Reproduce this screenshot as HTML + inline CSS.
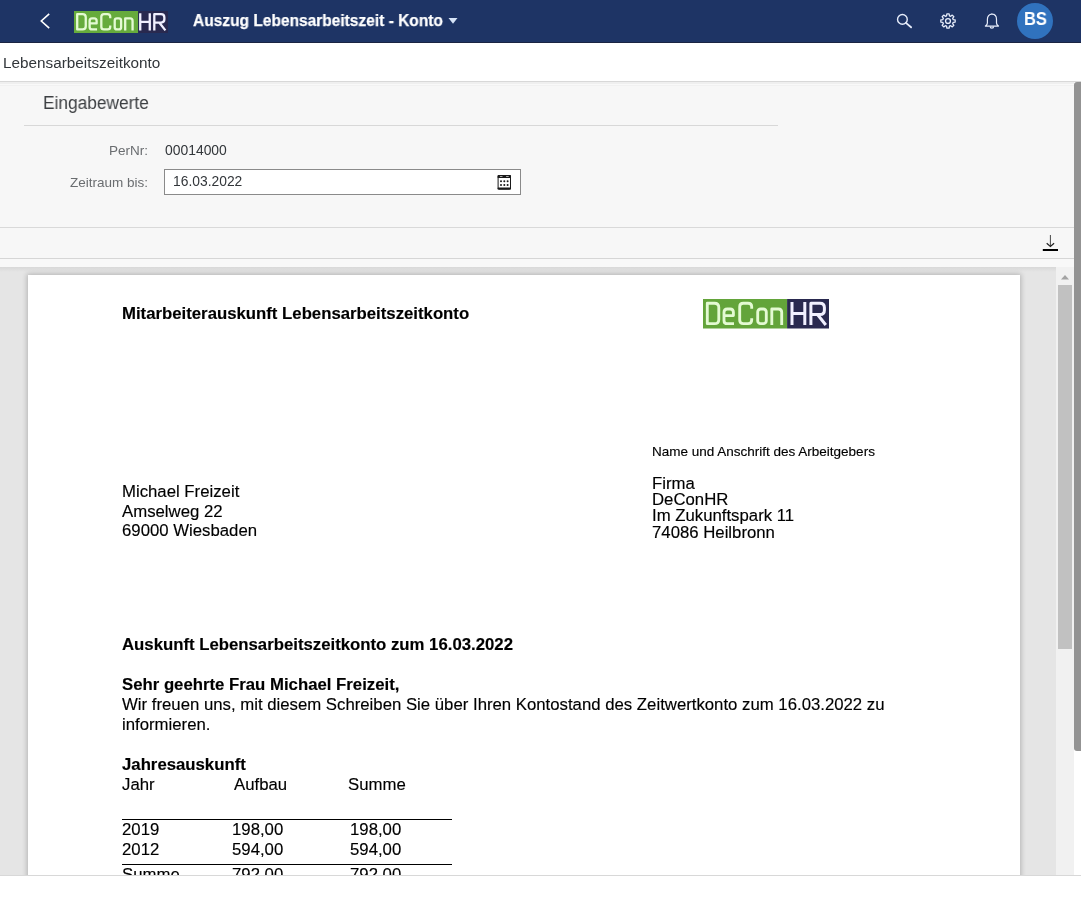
<!DOCTYPE html>
<html><head><meta charset="utf-8">
<style>
*{box-sizing:border-box;margin:0;padding:0}
html,body{width:1081px;height:908px;overflow:hidden;background:#fff;font-family:"Liberation Sans",sans-serif}
.a{position:absolute;white-space:nowrap;line-height:1;will-change:transform}
#hdr{position:absolute;left:0;top:0;width:1081px;height:43px;background:#1e3465;border-bottom:1px solid #1b2542}
#sub{position:absolute;left:0;top:43px;width:1081px;height:39px;background:#fff;border-bottom:1px solid #d8d8d8}
#form{position:absolute;left:0;top:82px;width:1074px;height:146px;background:linear-gradient(#efefef 0,#efefef 2px,#f9f9f9 2px,#f9f9f9 3px,#f1f1f1 3px,#f1f1f1 4px,#f7f7f7 4px);border-bottom:1px solid #d9d9d9}
#tool{position:absolute;left:0;top:228px;width:1074px;height:31px;background:#f7f7f7;border-bottom:1px solid #d6d6d6}
#gap{position:absolute;left:0;top:259px;width:1074px;height:8px;background:#f8f8f8}
#viewer{position:absolute;left:0;top:267px;width:1056px;height:608px;background:#e5e5e5;overflow:hidden}
#page{position:absolute;left:28px;top:8px;width:992px;height:700px;background:#fff;box-shadow:0 0 5px 1px rgba(0,0,0,0.22)}
#vtop{position:absolute;left:0;top:0;width:1056px;height:5px;background:linear-gradient(#d8d8d8,#e5e5e5)}
#track{position:absolute;left:1056px;top:267px;width:18px;height:608px;background:#f1f1f1}
#thumb{position:absolute;left:1058px;top:285px;width:14px;height:364px;background:#c1c1c1}
#vbot{position:absolute;left:0;top:875px;width:1081px;height:1px;background:#d8d8d8}
#osb{position:absolute;left:1074px;top:82px;width:7px;height:669px;background:#939393;border-radius:3px 0 0 3px}
.doc{position:absolute;left:0;top:-267px;width:1081px;height:908px;color:#000}
.doc .a{-webkit-text-stroke:0.15px #000}
</style></head><body>
<div id="hdr">
  <svg class="a" style="left:38px;top:12px" width="14" height="18" viewBox="0 0 14 18"><polyline points="11.2,1.8 3.3,9 11.2,16.2" fill="none" stroke="#fff" stroke-width="1.6"/></svg>
  <svg class="a" style="left:74px;top:11px" width="94" height="22" viewBox="0 0 126.3 29.5" preserveAspectRatio="none">
    <rect x="0" y="0" width="86.3" height="29.5" fill="#66ab3c"/>
    <rect x="86.3" y="0" width="43" height="29.5" fill="#29294f"/>
    <g fill="none" stroke="#e4fad3" stroke-width="3.1" stroke-linejoin="round">
    <path d="M4.3,4.2 H11.5 Q15.8,4.2 15.8,8.5 V20.4 Q15.8,24.7 11.5,24.7 H4.3 Z"/>
    <path d="M21,16.6 H30.4 V13.3 Q30.4,10 27.1,10 H24.3 Q21,10 21,13.3 V21.4 Q21,24.7 24.3,24.7 H31"/>
    <path d="M48.7,9.8 V7.8 Q48.7,4.2 45.1,4.2 H40.3 Q36.7,4.2 36.7,7.8 V21.1 Q36.7,24.7 40.3,24.7 H45.1 Q48.7,24.7 48.7,21.1 V19.3"/>
    <rect x="54.7" y="10" width="8.6" height="14.7" rx="3"/>
    <path d="M68.8,26 V10 H75.4 Q78.7,10 78.7,13.3 V26"/>
    </g>
    <g fill="none" stroke="#f1f0ff" stroke-width="3.1" stroke-linejoin="round">
    <path d="M89,2.9 V26 M101.8,2.9 V26 M89,14.6 H101.8"/>
    <path d="M107.9,26 V4.2 H117 Q121.4,4.2 121.4,8.6 V11.2 Q121.4,15.5 117,15.5 H107.9 M114.5,15.5 L122.8,26"/>
    </g>
  </svg>
  <div class="a" style="left:192.5px;top:11.8px;font-size:16.5px;font-weight:bold;color:#fff;transform:scaleX(0.94);transform-origin:0 0;-webkit-text-stroke:0.25px #fff">Auszug Lebensarbeitszeit - Konto</div>
  <svg class="a" style="left:448px;top:17px" width="10" height="8" viewBox="0 0 10 8"><polygon points="0.5,1 9.5,1 5,6.8" fill="#d6e4f7"/></svg>
  <svg class="a" style="left:894px;top:11px" width="20" height="20" viewBox="0 0 20 20"><circle cx="8.4" cy="8.4" r="4.85" fill="none" stroke="#e6ecfa" stroke-width="1.4"/><line x1="11.9" y1="11.9" x2="17.1" y2="16.3" stroke="#e6ecfa" stroke-width="1.8" stroke-linecap="round"/></svg>
  <svg class="a" style="left:938px;top:11px" width="20" height="20" viewBox="0 0 20 20">
    <path d="M8.53,4.86 L8.89,2.84 L11.11,2.84 L11.47,4.86 L12.59,5.32 L14.28,4.15 L15.85,5.72 L14.68,7.41 L15.14,8.53 L17.16,8.89 L17.16,11.11 L15.14,11.47 L14.68,12.59 L15.85,14.28 L14.28,15.85 L12.59,14.68 L11.47,15.14 L11.11,17.16 L8.89,17.16 L8.53,15.14 L7.41,14.68 L5.72,15.85 L4.15,14.28 L5.32,12.59 L4.86,11.47 L2.84,11.11 L2.84,8.89 L4.86,8.53 L5.32,7.41 L4.15,5.72 L5.72,4.15 L7.41,5.32Z" fill="none" stroke="#e6ecfa" stroke-width="1.3" stroke-linejoin="round"/>
    <circle cx="10" cy="10" r="2.45" fill="none" stroke="#e6ecfa" stroke-width="1.3"/>
  </svg>
  <svg class="a" style="left:982px;top:11px" width="20" height="20" viewBox="0 0 20 20">
    <path d="M9.9,3.1 C7.1,3.1 5.4,5.3 5.4,8.3 V12.1 C5.4,13.5 4.6,14.4 3.4,15.1 H16.5 C15.3,14.4 14.5,13.5 14.5,12.1 V8.3 C14.5,5.3 12.7,3.1 9.9,3.1 Z M9.9,2.2 V3.1" fill="none" stroke="#e6ecfa" stroke-width="1.2" stroke-linejoin="round"/>
    <path d="M8.2,15.5 A1.7,1.7 0 0 0 11.6,15.5" fill="none" stroke="#e6ecfa" stroke-width="1.3"/>
  </svg>
  <div class="a" style="left:1017px;top:3px;width:36px;height:36px;border-radius:50%;background:#3072be"></div>
  <div class="a" style="left:1024.4px;top:11.4px;font-size:17.8px;font-weight:bold;color:#fff;transform:scaleX(0.93);transform-origin:0 0">BS</div>
</div>
<div id="sub"><div class="a" style="left:2.8px;top:11.8px;font-size:15.3px;color:#32363a">Lebensarbeitszeitkonto</div></div>
<div id="form">
  <div class="a" style="left:43px;top:12.2px;font-size:18px;color:#3c3f42;transform:scaleX(0.962);transform-origin:0 0">Eingabewerte</div>
  <div class="a" style="left:24px;top:43px;width:754px;height:1px;background:#d8d8d8"></div>
  <div class="a" style="left:0;width:148px;text-align:right;top:61.7px;font-size:13.5px;color:#6a6d70">PerNr:</div>
  <div class="a" style="left:164.9px;top:61.6px;font-size:13.9px;color:#32363a">00014000</div>
  <div class="a" style="left:0;width:148px;text-align:right;top:93.6px;font-size:13.5px;color:#6a6d70">Zeitraum bis:</div>
  <div class="a" style="left:164px;top:87px;width:357px;height:26px;background:#fff;border:1px solid #8a8a8a"></div>
  <div class="a" style="left:173px;top:93.3px;font-size:13.85px;color:#32363a">16.03.2022</div>
  <svg class="a" style="left:496px;top:92px" width="16" height="16" viewBox="0 0 16 16">
    <rect x="2.1" y="1.6" width="12.4" height="13.6" rx="0.8" fill="none" stroke="#1a1a1a" stroke-width="1"/>
    <rect x="1.6" y="1.1" width="13.4" height="2.9" rx="0.6" fill="#1a1a1a"/>
    <rect x="3.9" y="2.1" width="2.6" height="0.8" fill="#fff" opacity="0.8"/>
    <rect x="10.1" y="2.1" width="2.6" height="0.8" fill="#fff" opacity="0.8"/>
    <rect x="1.6" y="13.6" width="13.4" height="2" rx="0.6" fill="#1a1a1a"/>
    <g fill="#1a1a1a"><circle cx="5" cy="7.2" r="1"/><circle cx="8.3" cy="7.2" r="1"/><circle cx="11.6" cy="7.2" r="1"/><circle cx="5" cy="11" r="1"/><circle cx="8.3" cy="11" r="1"/><circle cx="11.6" cy="11" r="1"/></g>
  </svg>
</div>
<div id="tool">
  <svg class="a" style="left:1040px;top:4px" width="20" height="24" viewBox="0 0 20 24">
    <line x1="10.4" y1="3" x2="10.4" y2="14" stroke="#333" stroke-width="0.9"/>
    <polyline points="6.7,11.3 10.4,14.5 14.1,11.3" fill="none" stroke="#222" stroke-width="1.2"/>
    <rect x="2.8" y="17" width="15.2" height="2" fill="#000"/>
  </svg>
</div>
<div id="gap"></div>
<div id="viewer">
  <div id="vtop"></div>
  <div id="page"></div>
  <div class="doc">
  <div class="a" style="left:121.9px;top:305.87px;font-size:16.75px;font-weight:bold">Mitarbeiterauskunft Lebensarbeitszeitkonto</div>
  <svg class="a" style="left:703.3px;top:299.2px" width="126.3" height="29.5" viewBox="0 0 126.3 29.5"><rect x="0" y="0" width="84.1" height="29.5" fill="#63a43a"/>
    <rect x="84.1" y="0" width="43" height="29.5" fill="#29294f"/>
    <g fill="none" stroke="#e4fad3" stroke-width="2.85" stroke-linejoin="round">
    <path d="M4.3,4.2 H11.5 Q15.8,4.2 15.8,8.5 V20.4 Q15.8,24.7 11.5,24.7 H4.3 Z"/>
    <path d="M21,16.6 H30.4 V13.3 Q30.4,10 27.1,10 H24.3 Q21,10 21,13.3 V21.4 Q21,24.7 24.3,24.7 H31"/>
    <path d="M48.7,9.8 V7.8 Q48.7,4.2 45.1,4.2 H40.3 Q36.7,4.2 36.7,7.8 V21.1 Q36.7,24.7 40.3,24.7 H45.1 Q48.7,24.7 48.7,21.1 V19.3"/>
    <rect x="54.7" y="10" width="8.6" height="14.7" rx="3"/>
    <path d="M68.8,26 V10 H75.4 Q78.7,10 78.7,13.3 V26"/>
    </g>
    <g fill="none" stroke="#f1f0ff" stroke-width="3" stroke-linejoin="round">
    <path d="M89,2.9 V26 M101.8,2.9 V26 M89,14.6 H101.8"/>
    <path d="M107.9,26 V4.2 H117 Q121.4,4.2 121.4,8.6 V11.2 Q121.4,15.5 117,15.5 H107.9 M114.5,15.5 L122.8,26"/>
    </g></svg>
  <div class="a" style="left:652.2px;top:445.37px;font-size:13.5px">Name und Anschrift des Arbeitgebers</div>
  <div class="a" style="left:652.4px;top:475.97px;font-size:16.75px">Firma</div>
  <div class="a" style="left:652.4px;top:492.17px;font-size:16.75px">DeConHR</div>
  <div class="a" style="left:652.4px;top:508.37px;font-size:16.75px">Im Zukunftspark 11</div>
  <div class="a" style="left:652.4px;top:524.57px;font-size:16.75px">74086 Heilbronn</div>
  <div class="a" style="left:121.9px;top:483.97px;font-size:16.75px">Michael Freizeit</div>
  <div class="a" style="left:121.9px;top:503.62px;font-size:16.75px">Amselweg 22</div>
  <div class="a" style="left:121.9px;top:523.27px;font-size:16.75px">69000 Wiesbaden</div>
  <div class="a" style="left:121.9px;top:636.67px;font-size:16.75px;font-weight:bold">Auskunft Lebensarbeitszeitkonto zum 16.03.2022</div>
  <div class="a" style="left:121.9px;top:676.67px;font-size:16.75px;font-weight:bold">Sehr geehrte Frau Michael Freizeit,</div>
  <div class="a" style="left:121.9px;top:696.87px;font-size:16.75px">Wir freuen uns, mit diesem Schreiben Sie über Ihren Kontostand des Zeitwertkonto zum 16.03.2022 zu</div>
  <div class="a" style="left:121.9px;top:716.67px;font-size:16.75px">informieren.</div>
  <div class="a" style="left:121.9px;top:757.07px;font-size:16.75px;font-weight:bold">Jahresauskunft</div>
  <div class="a" style="left:121.9px;top:776.57px;font-size:16.75px">Jahr</div>
  <div class="a" style="left:233.9px;top:776.57px;font-size:16.75px">Aufbau</div>
  <div class="a" style="left:348.4px;top:776.57px;font-size:16.75px">Summe</div>
  <div class="a" style="left:122px;top:819px;width:330px;height:1px;background:#000"></div>
  <div class="a" style="left:121.9px;top:821.87px;font-size:16.75px">2019</div>
  <div class="a" style="left:231.9px;top:821.87px;font-size:16.75px">198,00</div>
  <div class="a" style="left:350.4px;top:821.87px;font-size:16.75px">198,00</div>
  <div class="a" style="left:121.9px;top:842.07px;font-size:16.75px">2012</div>
  <div class="a" style="left:231.9px;top:842.07px;font-size:16.75px">594,00</div>
  <div class="a" style="left:350.4px;top:842.07px;font-size:16.75px">594,00</div>
  <div class="a" style="left:121.9px;top:867.07px;font-size:16.75px">Summe</div>
  <div class="a" style="left:231.9px;top:867.07px;font-size:16.75px">792,00</div>
  <div class="a" style="left:350.4px;top:867.07px;font-size:16.75px">792,00</div>
  <div class="a" style="left:122px;top:864px;width:330px;height:1px;background:#000"></div>
  </div>
</div>
<div id="track"></div>
<svg class="a" style="left:1058px;top:272px" width="14" height="10" viewBox="0 0 14 10"><polygon points="3,7.5 11,7.5 7,3" fill="#a3a3a3"/></svg>
<div id="thumb"></div>
<div id="vbot"></div>
<div id="osb"></div>
</body></html>
